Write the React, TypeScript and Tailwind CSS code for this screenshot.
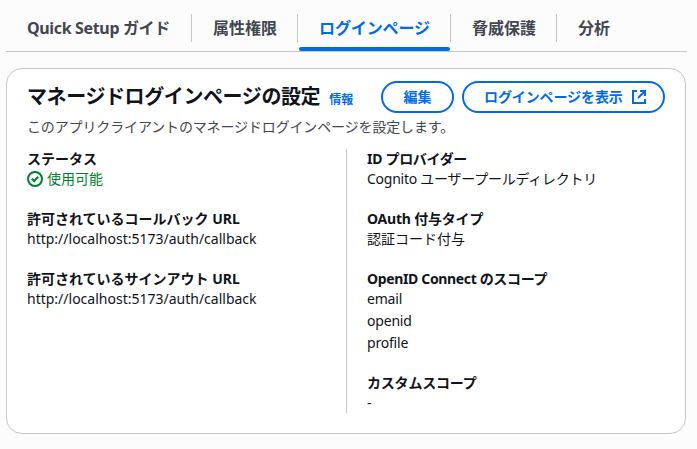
import clsx from 'clsx';
import type { ReactNode } from 'react';

const tabs = [
  { label: 'Quick Setup ガイド', width: 'w-[186px]', tracking: 'tracking-[-0.35px]' },
  { label: '属性権限', width: 'w-[106px]', tracking: 'tracking-normal' },
  { label: 'ログインページ', width: 'w-[153px]', tracking: 'tracking-[-0.1px]', active: true },
  { label: '脅威保護', width: 'w-[106px]', tracking: 'tracking-normal' },
  { label: '分析', width: 'w-[75px]', tracking: 'tracking-normal' },
];

function ExternalIcon() {
  return (
    <svg className="w-4 h-4 shrink-0" viewBox="0 0 16 16" fill="none" stroke="currentColor" strokeWidth="2">
      <path d="M9 2h5v5" />
      <path d="m7 9 7-7" />
      <path d="M14 10v4H2V2h4" />
    </svg>
  );
}

function SuccessIcon() {
  return (
    <svg className="w-4 h-4 shrink-0" viewBox="0 0 16 16" fill="none" stroke="currentColor" strokeWidth="2">
      <circle cx="8" cy="8" r="7" />
      <path d="m4.8 7.8 2.4 2.2 4-4.2" />
    </svg>
  );
}

function Field({ label, tracking, children }: { label: string; tracking?: string; children: ReactNode }) {
  return (
    <div>
      <div className={clsx('font-bold leading-5', tracking)}>{label}</div>
      <div className="leading-5">{children}</div>
    </div>
  );
}

export default function App() {
  return (
    <div className="h-[449px] w-[697px] overflow-hidden bg-[#fcfcfd] pl-1.5 pr-2.5 text-sm text-[#0f141a] whitespace-nowrap font-['Noto_Sans','Noto_Sans_CJK_JP',sans-serif]">
      {/* Tabs */}
      <div className="flex h-[52px] w-[681px] items-end border-b border-[#c6c6cd]">
        {tabs.map((tab, i) => (
          <div key={tab.label} className={clsx('flex h-[37px] flex-col justify-between', tab.width)}>
            <div
              className={clsx(
                'flex h-7 items-center pl-[21px] text-base font-bold border-[#c6c6cd]',
                i < tabs.length - 1 && 'border-r',
                tab.active ? 'text-[#006ce0]' : 'text-[#424650]',
                tab.tracking,
              )}
            >
              {tab.label}
            </div>
            {tab.active && <div className="ml-px mr-px h-1 rounded-sm bg-[#006ce0]" />}
          </div>
        ))}
      </div>

      {/* Settings card */}
      <div className="mt-4 h-[366px] w-[680px] rounded-2xl border border-[#c6c6cd] bg-white px-5 pt-3">
        <div className="flex h-8 justify-between">
          <div className="flex items-baseline">
            <h2 className="text-xl font-bold leading-8 tracking-[-0.4px]">マネージドログインページの設定</h2>
            <a className="ml-[9px] text-xs font-bold text-[#006ce0]">情報</a>
          </div>
          <div className="flex gap-2 font-bold text-[#006ce0]">
            <button className="h-8 w-[73px] rounded-full border-2 border-[#006ce0]">編集</button>
            <button className="flex h-8 w-[203px] items-center rounded-full border-2 border-[#006ce0] pl-5">
              <span className="w-[147px] text-left tracking-[-0.1px]">ログインページを表示</span>
              <ExternalIcon />
            </button>
          </div>
        </div>
        <p className="mt-1 leading-5 tracking-[-0.14px] text-[#424650]">
          このアプリクライアントのマネージドログインページを設定します。
        </p>

        <div className="mt-3 flex h-[264px]">
          <div className="flex w-[320px] flex-col gap-5 border-r border-[#c6c6cd]">
            <Field label="ステータス">
              <span className="flex items-center gap-1 text-[#00802f]">
                <SuccessIcon />
                使用可能
              </span>
            </Field>
            <Field label="許可されているコールバック URL">http://localhost:5173/auth/callback</Field>
            <Field label="許可されているサインアウト URL">http://localhost:5173/auth/callback</Field>
          </div>
          <div className="flex flex-col gap-5 pl-5">
            <Field label="ID プロバイダー" tracking="tracking-[-0.3px]">
              <span className="tracking-[-0.25px]">Cognito ユーザープールディレクトリ</span>
            </Field>
            <Field label="OAuth 付与タイプ" tracking="tracking-[-0.2px]">
              認証コード付与
            </Field>
            <Field label="OpenID Connect のスコープ" tracking="tracking-[-0.35px]">
              <ul className="tracking-[-0.2px]">
                <li className="h-[22px]">email</li>
                <li className="h-[22px]">openid</li>
                <li className="h-5">profile</li>
              </ul>
            </Field>
            <Field label="カスタムスコープ" tracking="tracking-[-0.2px]">
              -
            </Field>
          </div>
        </div>
      </div>
    </div>
  );
}
